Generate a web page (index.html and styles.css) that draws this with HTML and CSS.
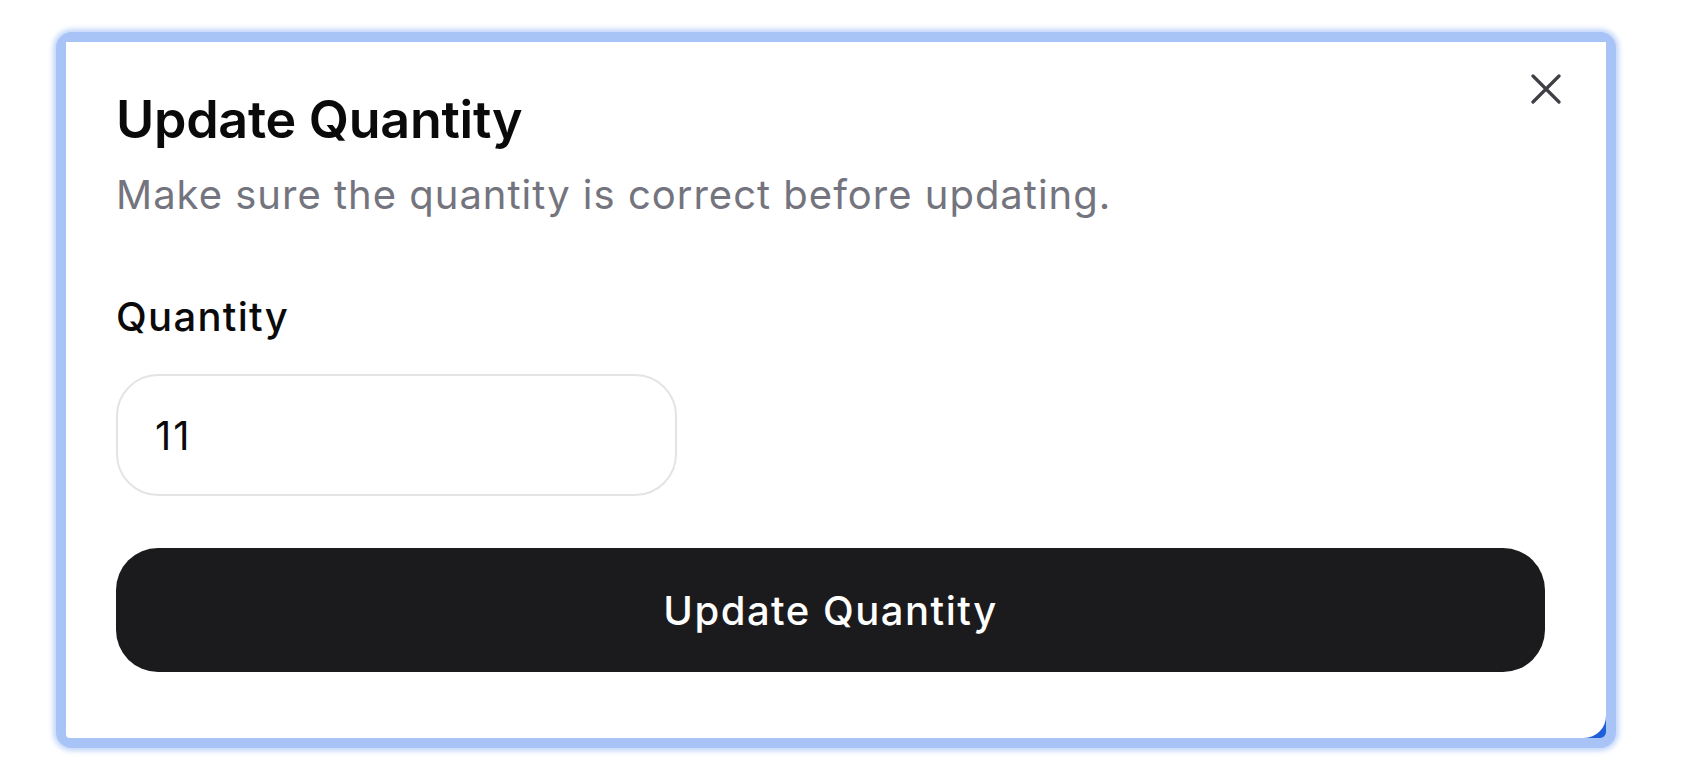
FILE: index.html
```html
<!DOCTYPE html>
<html lang="en">
<head>
<meta charset="utf-8">
<title>Update Quantity</title>
<link rel="stylesheet" href="styles.css">
</head>
<body>
<div class="frame">
  <div class="card">
    <button class="close" aria-label="Close">
      <svg width="30" height="30" viewBox="0 0 30 30"><path d="M2 2 L28 28 M28 2 L2 28" stroke="#3f3f46" stroke-width="3.2" stroke-linecap="round" fill="none"/></svg>
    </button>
    <h1 class="title">Update Quantity</h1>
    <p class="subtitle">Make sure the quantity is correct before updating.</p>
    <label class="label" for="qty">Quantity</label>
    <input id="qty" class="input" type="text" value="11">
    <button class="submit">Update Quantity</button>
  </div>
</div>
</body>
</html>
```

FILE: styles.css
```css
html, body {
  margin: 0;
  padding: 0;
  background: #ffffff;
}
body {
  font-family: Inter, "Noto Sans", sans-serif;
  width: 1686px;
  height: 768px;
  overflow: hidden;
}
.frame {
  margin: 32px 0 0 56px;
  width: 1540px;
  height: 696px;
  border: 10px solid #a8c4f7;
  border-radius: 16px;
  background: #1f5fd8;
  box-shadow: 0 0 5px 3px rgba(168, 196, 247, 0.7);
}
.card {
  position: relative;
  box-sizing: border-box;
  height: 100%;
  background: #ffffff;
  border-radius: 0 0 22px 4px;
  padding: 47px 61px 0 50px;
  display: flex;
  flex-direction: column;
  align-items: flex-start;
}
.close {
  position: absolute;
  top: 32px;
  right: 45px;
  width: 30px;
  height: 30px;
  padding: 0;
  border: 0;
  background: none;
  display: flex;
}
.title {
  margin: 0;
  font-size: 52px;
  line-height: 62px;
  font-weight: 600;
  color: #0a0a0a;
  letter-spacing: -0.27px;
}
.subtitle {
  margin: 20px 0 0;
  font-size: 40px;
  line-height: 48px;
  font-weight: 400;
  color: #74747e;
  letter-spacing: 1px;
}
.label {
  margin-top: 74px;
  font-size: 40px;
  line-height: 48px;
  font-weight: 500;
  color: #0a0a0a;
  letter-spacing: 1.3px;
}
.input {
  margin-top: 33px;
  box-sizing: border-box;
  width: 561px;
  height: 122px;
  border: 2px solid #e4e4e7;
  border-radius: 42px;
  padding: 0 0 0 37px;
  font-family: Inter, "Noto Sans", sans-serif;
  font-size: 40px;
  letter-spacing: 2px;
  color: #0a0a0a;
  background: #ffffff;
  outline: none;
}
.submit {
  margin-top: 52px;
  align-self: stretch;
  height: 124px;
  border: 0;
  border-radius: 42px;
  background: #1b1b1d;
  color: #ffffff;
  font-family: Inter, "Noto Sans", sans-serif;
  font-size: 40px;
  font-weight: 500;
  letter-spacing: 1.5px;
}
```
